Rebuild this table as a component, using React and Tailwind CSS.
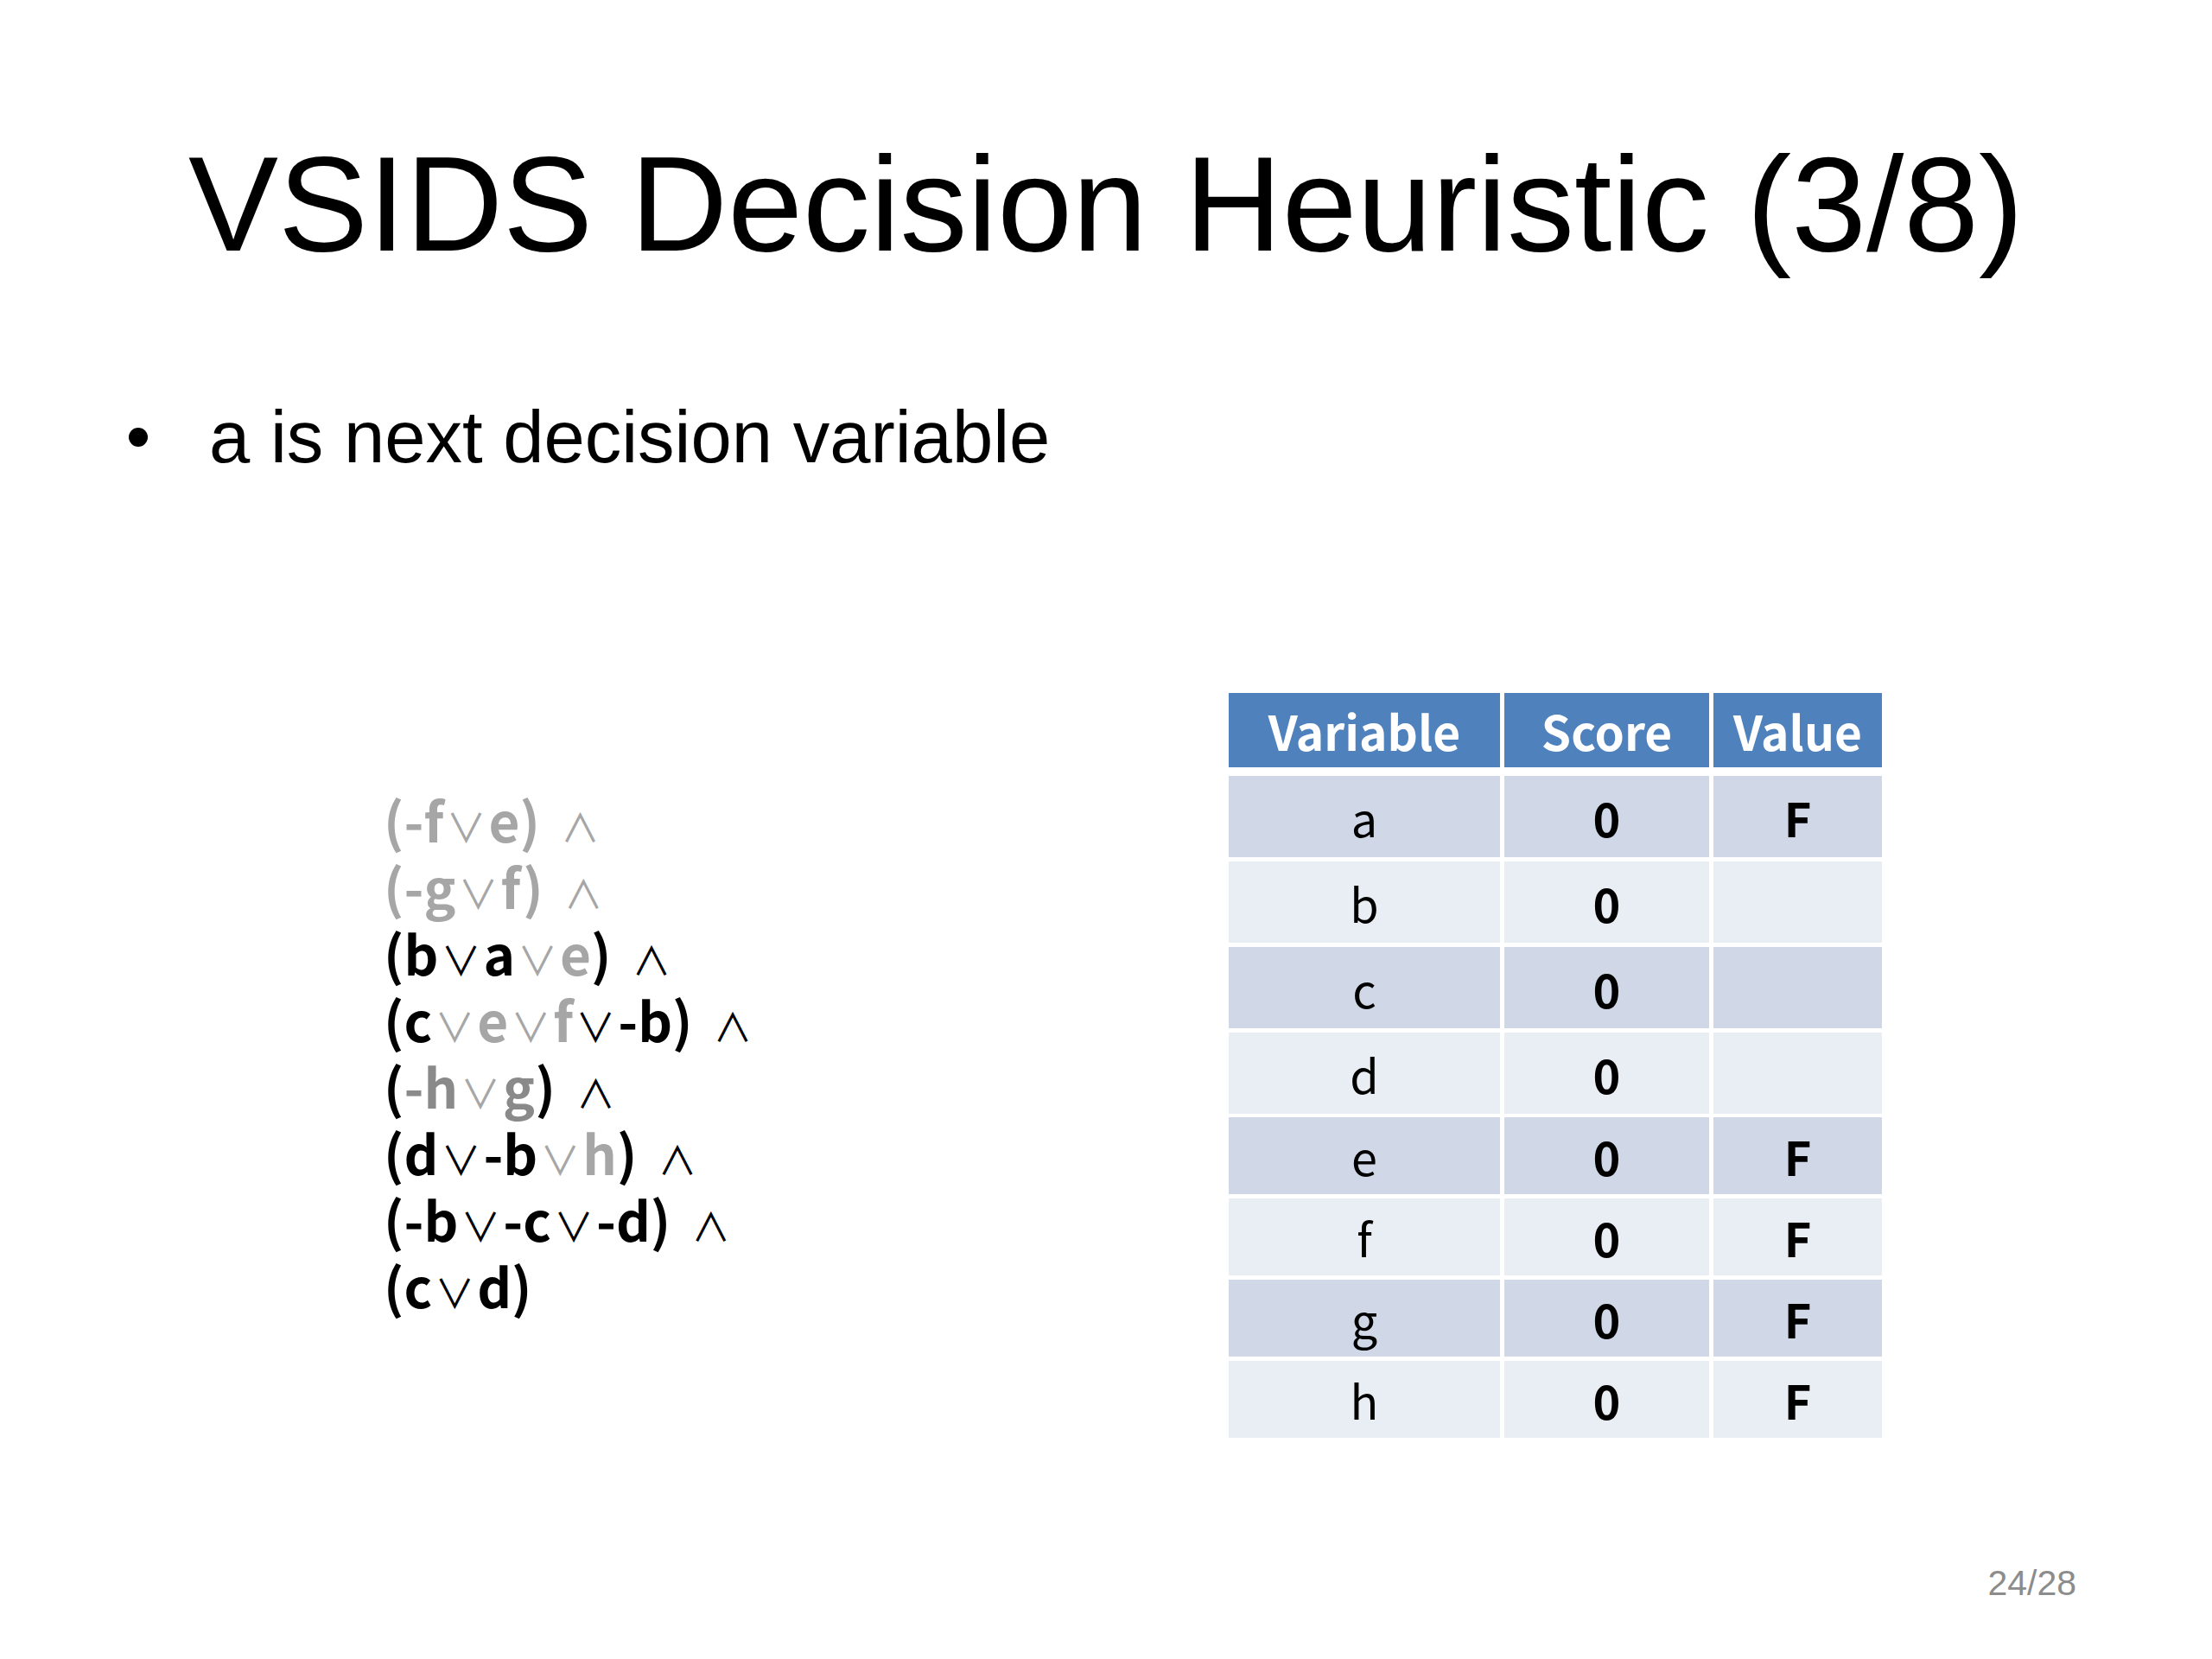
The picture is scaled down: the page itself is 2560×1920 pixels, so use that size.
import React from 'react';

const tone = {
  k: 'text-black',
  l: 'text-[#a6a6a6]',
  m: 'text-[#8a8a8a]',
};

// each clause: list of [text, tone]; "v" and "^" become the logic symbols
const clauses = [
  [['(-f', 'l'], ['v', 'l'], ['e)', 'l'], ['^', 'l']],
  [['(-g', 'l'], ['v', 'l'], ['f)', 'l'], ['^', 'l']],
  [['(b', 'k'], ['v', 'k'], ['a', 'k'], ['v', 'l'], ['e', 'l'], [')', 'k'], ['^', 'k']],
  [['(c', 'k'], ['v', 'l'], ['e', 'l'], ['v', 'l'], ['f', 'l'], ['v', 'k'], ['-b)', 'k'], ['^', 'k']],
  [['(', 'k'], ['-h', 'm'], ['v', 'l'], ['g', 'm'], [')', 'k'], ['^', 'k']],
  [['(d', 'k'], ['v', 'k'], ['-b', 'k'], ['v', 'l'], ['h', 'l'], [')', 'k'], ['^', 'k']],
  [['(-b', 'k'], ['v', 'k'], ['-c', 'k'], ['v', 'k'], ['-d)', 'k'], ['^', 'k']],
  [['(c', 'k'], ['v', 'k'], ['d)', 'k']],
];

const rows = [
  { v: 'a', s: '0', val: 'F', dark: true, h: 'h-[94px]', mt: 'mt-[10px]' },
  { v: 'b', s: '0', val: '', dark: false, h: 'h-[94px]', mt: 'mt-[5px]' },
  { v: 'c', s: '0', val: '', dark: true, h: 'h-[94px]', mt: 'mt-[5px]' },
  { v: 'd', s: '0', val: '', dark: false, h: 'h-[94px]', mt: 'mt-[5px]' },
  { v: 'e', s: '0', val: 'F', dark: true, h: 'h-[89px]', mt: 'mt-[4px]' },
  { v: 'f', s: '0', val: 'F', dark: false, h: 'h-[89px]', mt: 'mt-[5px]' },
  { v: 'g', s: '0', val: 'F', dark: true, h: 'h-[89px]', mt: 'mt-[5px]' },
  { v: 'h', s: '0', val: 'F', dark: false, h: 'h-[89px]', mt: 'mt-[5px]' },
];

const kr = "font-['Noto_Sans_CJK_KR',sans-serif]";

const Clause = ({ parts }) => (
  <div className="h-[77px] leading-[77px] whitespace-pre">
    {parts.map(([t, c], i) => {
      if (t === 'v') {
        return (
          <span key={i} className={`${tone[c]} font-normal text-[46px] px-[3px]`}>
            ∨
          </span>
        );
      }
      if (t === '^') {
        return (
          <span key={i} className={`${tone[c]} font-normal text-[45px] ml-[24px]`}>
            ∧
          </span>
        );
      }
      return (
        <span key={i} className={tone[c]}>
          {t}
        </span>
      );
    })}
  </div>
);

export default function App() {
  return (
    <div className="w-[2560px] h-[1920px] bg-white text-black overflow-hidden">
      {/* Title */}
      <h1 className="pt-[158px] text-center text-[156px] leading-none font-['Liberation_Sans',Arial,sans-serif] font-normal">
        VSIDS Decision Heuristic (3/8)
      </h1>

      {/* Bullet */}
      <div className="mt-[149px] flex items-center h-[85px] font-['Liberation_Sans',Arial,sans-serif]">
        <span className="ml-[149px] w-[22px] h-[22px] rounded-full bg-black" />
        <span className="ml-[71px] text-[85px] leading-none">a is next decision variable</span>
      </div>

      {/* Clauses + table */}
      <div className="flex items-start">
        <div className={`ml-[444px] mt-[362px] text-[62px] font-bold ${kr}`}>
          {clauses.map((c, i) => (
            <Clause key={i} parts={c} />
          ))}
        </div>

        <div className={`ml-auto mr-[382px] mt-[254px] w-[756px] ${kr}`}>
          <div className="grid grid-cols-[314px_237px_195px] gap-x-[5px] h-[86px] text-white font-bold text-[55px]">
            <div className="bg-[#4f81bd] flex items-center justify-center">Variable</div>
            <div className="bg-[#4f81bd] flex items-center justify-center">Score</div>
            <div className="bg-[#4f81bd] flex items-center justify-center">Value</div>
          </div>
          {rows.map((r) => (
            <div
              key={r.v}
              className={`grid grid-cols-[314px_237px_195px] gap-x-[5px] ${r.h} ${r.mt} text-[54px]`}
            >
              <div className={`${r.dark ? 'bg-[#d0d8e8]' : 'bg-[#e9edf4]'} flex items-center justify-center`}>
                {r.v}
              </div>
              <div className={`${r.dark ? 'bg-[#d0d8e8]' : 'bg-[#e9edf4]'} flex items-center justify-center font-bold`}>
                {r.s}
              </div>
              <div className={`${r.dark ? 'bg-[#d0d8e8]' : 'bg-[#e9edf4]'} flex items-center justify-center font-bold`}>
                {r.val}
              </div>
            </div>
          ))}
        </div>
      </div>

      {/* Page number */}
      <div className="mt-[148px] pr-[157px] flex justify-end text-[41px] leading-none text-[#8c8c8c] font-['Liberation_Sans',Arial,sans-serif]">
        24/28
      </div>
    </div>
  );
}
